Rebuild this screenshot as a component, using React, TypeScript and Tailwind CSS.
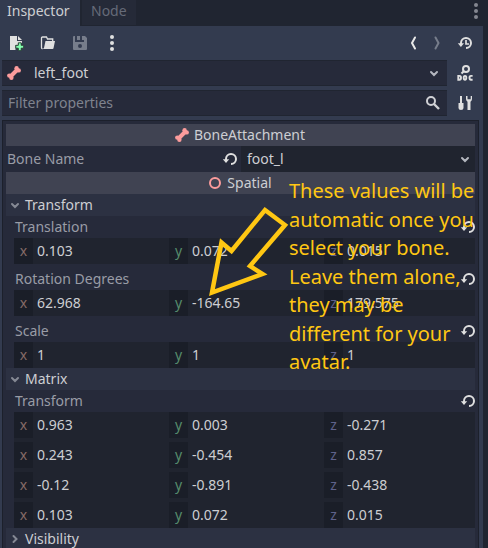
import React from 'react';

const ui = "font-['Noto_Sans',sans-serif] text-[14px] leading-[20px]";

function Reload() {
  return (
    <svg width="16" height="16" viewBox="0 0 16 16" fill="none" className="shrink-0">
      <path d="M4 9.2V8a5 5 0 1 1 5 5" stroke="#e0e0e0" strokeWidth="2" />
      <path d="M.8 8.3h6.4L4 12z" fill="#e0e0e0" />
    </svg>
  );
}

function Bone() {
  return (
    <svg width="16" height="16" viewBox="0 0 16 16" fill="#fc9c9c" className="shrink-0">
      <path d="M4.500 11.500 11.500 4.500" stroke="#fc9c9c" strokeWidth="4" />
      <circle cx="3.300" cy="10.600" r="2.200" />
      <circle cx="5.400" cy="12.700" r="2.200" />
      <circle cx="10.600" cy="3.300" r="2.200" />
      <circle cx="12.700" cy="5.400" r="2.200" />
    </svg>
  );
}

function Dots({ color }: { color: string }) {
  return (
    <svg width="16" height="16" viewBox="0 0 16 16" fill={color} className="shrink-0">
      <circle cx="8" cy="2" r="2" />
      <circle cx="8" cy="8" r="2" />
      <circle cx="8" cy="14" r="2" />
    </svg>
  );
}

function Chevron({ color = '#b4b7bf', open = true, size = 12 }: { color?: string; open?: boolean; size?: number }) {
  return (
    <svg width={size} height={size} viewBox="0 0 12 12" fill="none" stroke={color} strokeWidth="2" strokeLinecap="round" className="shrink-0">
      <path d={open ? 'M3 5 6 8l3-3' : 'M4.500 3l3 3-3 3'} />
    </svg>
  );
}

function Toolbar() {
  return (
    <div className="flex h-[34px] items-center pl-[8px] pr-[10px]">
      <svg width="16" height="16" viewBox="0 0 16 16" className="mr-4">
        <path d="M2 1h7v5h5v2h-4v2H7.500v5H2z" fill="#e0e0e0" />
        <path d="M10 1l4 4h-4z" fill="#e0e0e0" />
        <path d="M10.300 7.800h2.900v2.500h2.500v2.900h-2.500v2.500h-2.900v-2.500H7.800v-2.900h2.500z" fill="#84ffb1" stroke="#25372f" strokeWidth=".9" />
      </svg>
      <svg width="16" height="16" viewBox="0 0 16 16" className="mr-4">
        <path d="M2.500 14A1.500 1.500 0 0 1 1.500 12.500v-9.500a1 1 0 0 1 1-1H6.500l1 2h5.200v2" fill="none" stroke="#e0e0e0" strokeWidth="1.300" />
        <path d="M5.500 6H15l-1.500 7.200a1 1 0 0 1-1 .8H2.300c1.500 0 1.700-1 2-2.500z" fill="#e0e0e0" />
      </svg>
      <svg width="16" height="16" viewBox="0 0 16 16" className="mr-4">
        <path fillRule="evenodd" d="M2 1h1v6h9V1h1l2 2v11a1 1 0 0 1-1 1H2a1 1 0 0 1-1-1V2a1 1 0 0 1 1-1zM8 9a2 2 0 1 0 0 4 2 2 0 0 0 0-4z" fill="#777d8b" />
        <path d="M5 1h3v4H5zM10 1h2v4h-2z" fill="#777d8b" />
      </svg>
      <Dots color="#e0e0e0" />
      <div className="ml-auto flex items-center">
        <svg width="8" height="16" viewBox="0 0 8 16" fill="none" stroke="#e8e8e8" strokeWidth="2" strokeLinecap="round" className="mr-4">
          <path d="M6 2.500 3 8l3 5.500" />
        </svg>
        <svg width="8" height="16" viewBox="0 0 8 16" fill="none" stroke="#777d8b" strokeWidth="2" strokeLinecap="round" className="mr-[16px]">
          <path d="M2.500 2.500l3 5.500-3 5.500" />
        </svg>
        <svg width="16" height="16" viewBox="0 0 16 16" fill="none">
          <path d="M4 9V8a5 5 0 1 1 5 5" stroke="#e0e0e0" strokeWidth="2" />
          <path d="M.8 8.300h6.200L3.900 12z" fill="#e0e0e0" />
          <path d="M9 5v4h3" stroke="#e0e0e0" strokeWidth="1.700" />
        </svg>
      </div>
    </div>
  );
}

function Category({ icon, title }: { icon: React.ReactNode; title: string }) {
  return (
    <div className="flex h-[22px] items-center justify-center gap-1 bg-[#404352] pr-[2px] text-[#cdced2]">
      {icon}
      <span>{title}</span>
    </div>
  );
}

function Section({ title, open = true }: { title: string; open?: boolean }) {
  return (
    <div className="flex h-[22px] items-center gap-1 bg-[#2c3142] pl-[3px] text-[#cdced2]">
      <Chevron color="#858994" open={open} />
      <span>{title}</span>
    </div>
  );
}

function Label({ title, tall = false }: { title: string; tall?: boolean }) {
  return (
    <div className={`-mr-px flex items-center justify-between pl-[9px] text-[#999ca6] ${tall ? 'h-[26px] pt-1' : 'h-[22px]'}`}>
      <span>{title}</span>
      <Reload />
    </div>
  );
}

const axes = [
  { name: 'x', color: 'text-[#866b67]' },
  { name: 'y', color: 'text-[#568c6c]' },
  { name: 'z', color: 'text-[#5f628b]' },
];

function Vector({ values }: { values: string[] }) {
  return (
    <div className="ml-2 flex h-[26px] bg-[#20242f]">
      {values.map((v, i) => (
        <div key={i} className="flex w-[155px] shrink-0 items-center">
          <span className={`flex h-[26px] w-[19px] items-center justify-center bg-[#1a1e28] ${axes[i].color}`}>{axes[i].name}</span>
          <span className="ml-1 text-[#cdced2]">{v}</span>
        </div>
      ))}
    </div>
  );
}

const note = [
  'These values will be',
  'automatic once you',
  'select your bone.',
  'Leave them alone,',
  'they may be',
  'different for your',
  'avatar.',
];

export default function App() {
  return (
    <div className={`${ui} relative h-[548px] w-[488px] overflow-hidden bg-[#202531]`}>
      <div className="flex h-[26px] items-start">
        <div className="h-[26px] w-[80px] bg-[#333b4f] pl-[7px] pt-px text-[#cdced2]">Inspector</div>
        <div className="ml-[2px] h-[25px] w-[54px] bg-[#252a38] pl-[9px] pt-px text-[#666b78]">Node</div>
        <div className="ml-auto mr-1 pt-[3px]"><Dots color="#848790" /></div>
      </div>
      <div className="h-[522px] w-[483px] bg-[#333b4f]">
        <Toolbar />
        <div className="flex">
          <div className="ml-[2px] flex w-[445px] flex-col gap-1">
            <div className="flex h-[26px] items-center border-y border-[#202531] bg-[#262a3a] pl-[4px] pr-[7px] text-[#cdced2]">
              <Bone />
              <span className="ml-3">left_foot</span>
              <span className="ml-auto"><Chevron /></span>
            </div>
            <div className="flex h-[26px] items-center justify-between border-y border-[#202531] bg-[#262a3a] pl-[6px] pr-[6px] text-[#7f838e]">
              <span>Filter properties</span>
              <svg width="16" height="16" viewBox="0 0 16 16" fill="none" stroke="#d0d1d5" strokeWidth="2">
                <circle cx="6" cy="6" r="4" />
                <path d="m9 9 5 5" strokeWidth="2.400" />
              </svg>
            </div>
          </div>
          <div className="flex w-9 flex-col items-center gap-[14px] pt-[5px]">
            <svg width="16" height="16" viewBox="0 0 16 16" fill="none" stroke="#e0e0e0">
              <circle cx="9" cy="4" r="3" strokeWidth="2" />
              <path d="M7 6 4.500 8.500" strokeWidth="2" />
              <path d="M1.300 10.900h1.200q1.500 0 1.500 1.900t-1.500 1.900H1.300zM8 10.900q-1.300 0-1.300 1.900T8 14.700t1.300-1.900T8 10.900M15.600 10.900H14q-1.500 0-1.500 1.900t1.500 1.900h1.600" strokeWidth="1.900" />
            </svg>
            <svg width="16" height="16" viewBox="0 0 16 16" fill="#e0e0e0">
              <path d="M3 1h2v7h1.500v5q0 2-2.500 2t-2.500-2V8H3zM9 1v3q0 1.800 1.500 2.800V15h3V6.800Q15 5.800 15 4V1h-1.300v3.200h-3.200V1z" />
            </svg>
          </div>
        </div>
        <div className="ml-[2px] mt-1 h-[430px] w-[477px] border border-[#1c202b] bg-[#262a3a] pl-[3px] pr-[3px] pt-[3px]">
          <Category icon={<Bone />} title="BoneAttachment" />
          <div className="flex h-[26px]">
            <div className="flex w-[235px] items-center justify-between pl-px text-[#999ca6]">
              <span>Bone Name</span>
              <span className="mr-[3px]"><Reload /></span>
            </div>
            <div className="flex flex-1 items-center justify-between bg-[#20242f] pl-[6px] pr-1 text-[#cdced2]">
              <span>foot_l</span>
              <Chevron />
            </div>
          </div>
          <Category
            icon={<svg width="16" height="16" viewBox="0 0 16 16" fill="none"><circle cx="8" cy="8" r="5" stroke="#fc9c9c" strokeWidth="2" /></svg>}
            title="Spatial"
          />
          <Section title="Transform" />
          <Label title="Translation" />
          <Vector values={['0.103', '0.072', '0.015']} />
          <Label title="Rotation Degrees" tall />
          <Vector values={['62.968', '-164.65', '179.575']} />
          <Label title="Scale" tall />
          <Vector values={['1', '1', '1']} />
          <Section title="Matrix" />
          <Label title="Transform" />
          <div className="flex flex-col">
            <Vector values={['0.963', '0.003', '-0.271']} />
            <div className="ml-2 h-1 bg-[#20242f]" />
            <Vector values={['0.243', '-0.454', '0.857']} />
            <div className="ml-2 h-1 bg-[#20242f]" />
            <Vector values={['-0.12', '-0.891', '-0.438']} />
            <div className="ml-2 h-1 bg-[#20242f]" />
            <Vector values={['0.103', '0.072', '0.015']} />
          </div>
          <Section title="Visibility" open={false} />
        </div>
      </div>
      <svg className="absolute left-[196px] top-[196px]" width="100" height="110" viewBox="0 0 100 110" fill="none" stroke="#ffc713" strokeWidth="4.500">
        <path d="M69 14 89 29 54 70l12.500 8L16 96.500l9.500-50 10 8.500z" />
      </svg>
      <div className="absolute left-[289px] top-[177px] font-['Noto_Sans',sans-serif] text-[20px] leading-[28.5px] tracking-[-0.02px] text-[#ffc713]">
        {note.map((l) => (
          <div key={l} className="whitespace-nowrap">{l}</div>
        ))}
      </div>
    </div>
  );
}
